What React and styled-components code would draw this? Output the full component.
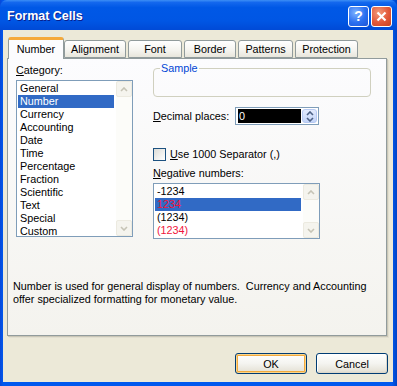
import React from 'react'
import styled, { createGlobalStyle } from 'styled-components'

const GlobalStyle = createGlobalStyle`
  body {
    margin: 0;
    background: #fff;
    font-family: 'Liberation Sans', Arial, sans-serif;
    font-size: 10.8px;
  }
`

const Window = styled.div`
  width: 397px;
  height: 386px;
  display: flex;
  flex-direction: column;
  background: linear-gradient(to right, #0848d8, #0058ee 3px, #0058ee 392px, #0043c4);
  box-sizing: border-box;
`

const TitleBar = styled.div`
  height: 30px;
  flex: none;
  display: flex;
  align-items: center;
  padding: 0 5px 0 7px;
  background: linear-gradient(to bottom, #3d8ff5 0%, #1468ee 8%, #0058e6 25%, #0056e4 70%, #004ad6 100%);
  border-radius: 7px 7px 0 0;
`

const Title = styled.span`
  color: #fff;
  font-family: 'Liberation Sans', Arial, sans-serif;
  font-weight: bold;
  font-size: 12.5px;
  text-shadow: 1px 1px 0 #0a1e8c;
  padding-top: 2px;
`

const CaptionButtons = styled.div`
  margin-left: auto;
  display: flex;
  gap: 2px;
  margin-top: 2px;
`

const CaptionButton = styled.div`
  width: 21px;
  height: 21px;
  box-sizing: border-box;
  border: 1px solid #fff;
  border-radius: 3px;
  display: flex;
  align-items: center;
  justify-content: center;
  color: #fff;
  font-weight: bold;
  font-size: 14px;
  background: ${p =>
    p.$close
      ? 'radial-gradient(circle at 35% 30%, #f29a7a, #e2583a 55%, #c7401e)'
      : 'radial-gradient(circle at 35% 30%, #7fb2ff, #2a6ff0 55%, #1d55d6)'};
`

const Body = styled.div`
  flex: 1;
  margin: 0 4px 4px 3px;
  background: #ece9d8;
  display: flex;
  flex-direction: column;
`

const TabStrip = styled.div`
  display: flex;
  align-items: flex-end;
  gap: 2px;
  height: 21px;
  margin-top: 7px;
  padding-left: 5px;
  position: relative;
  z-index: 1;
`

const Tab = styled.div`
  width: ${p => p.$w}px;
  height: ${p => (p.$active ? 22 : 18)}px;
  box-sizing: border-box;
  border: 1px solid #919b9c;
  border-bottom: ${p => (p.$active ? 'none' : '1px solid #919b9c')};
  border-top: ${p => (p.$active ? '3px solid #f5a93a' : '1px solid #919b9c')};
  border-radius: 3px 3px 0 0;
  margin-right: ${p => (p.$active ? '-2px' : '0')};
  margin-bottom: ${p => (p.$active ? '-1px' : '0')};
  background: ${p => (p.$active ? '#fcfcfe' : 'linear-gradient(#ffffff, #f4f3ee 60%, #e8e6dc)')};
  display: flex;
  align-items: center;
  justify-content: center;
  padding-bottom: ${p => (p.$active ? '2px' : '0')};
  color: #000;
`

const Panel = styled.div`
  height: 278px;
  margin: 0 6px 0 4px;
  box-sizing: border-box;
  border: 1px solid #919b9c;
  background: linear-gradient(#fcfcfe, #f4f3ee);
  box-shadow: 1px 1px 0 #c9c6b6, 2px 2px 0 #e2dfd0;
  padding: 3px 0 0 8px;
  display: flex;
  flex-direction: column;
`

const Upper = styled.div`
  display: flex;
  gap: 20px;
`

const Column = styled.div`
  display: flex;
  flex-direction: column;
  width: ${p => p.$w}px;
`

const Label = styled.div`
  height: 13px;
  line-height: 13px;
  width: ${p => (p.$w ? `${p.$w}px` : 'auto')};
  flex: none;
  margin-top: ${p => p.$mt || 0}px;
  color: #000;
  white-space: nowrap;
`

const ListBox = styled.div`
  display: flex;
  width: ${p => p.$w}px;
  height: ${p => p.$h}px;
  margin-top: 3px;
  box-sizing: border-box;
  border: 1px solid #7f9db9;
  background: #fff;
`

const ListItems = styled.div`
  flex: 1;
  padding: 1px 2px 0 1px;
`

const ListItem = styled.div`
  height: 13px;
  line-height: 13px;
  padding-left: 2px;
  white-space: nowrap;
  background: ${p => (p.$selected ? '#316ac5' : 'transparent')};
  color: ${p => (p.$red ? '#f0143c' : p.$selected ? '#fff' : '#000')};
`

const ScrollBar = styled.div`
  width: 16px;
  display: flex;
  flex-direction: column;
  justify-content: space-between;
  background: #fcfcf9;
`

const ScrollArrow = styled.div`
  width: 16px;
  height: 16px;
  box-sizing: border-box;
  border: 1px solid #eceae0;
  border-radius: 2px;
  background: #f5f4ee;
  display: flex;
  align-items: center;
  justify-content: center;
`

const SampleBox = styled.fieldset`
  margin: 0;
  height: 35px;
  box-sizing: border-box;
  border: 1px solid #d0d0bf;
  border-radius: 4px;
  padding: 0 6px;
`

const SampleLegend = styled.legend`
  color: #0046d5;
  padding: 0 1px;
  margin-left: 0;
  line-height: 13px;
`

const Row = styled.div`
  display: flex;
  align-items: center;
  margin-top: ${p => p.$mt || 0}px;
`

const SpinBox = styled.div`
  display: flex;
  width: 84px;
  height: 18px;
  box-sizing: border-box;
  border: 1px solid #7f9db9;
  background: #fff;
  padding: 1px 1px 1px 2px;
`

const SpinValue = styled.div`
  flex: 1;
  background: #000;
  color: #fff;
  line-height: 14px;
  padding-left: 1px;
  margin-right: 1px;
`

const SpinButtons = styled.div`
  width: 15px;
  display: flex;
  flex-direction: column;
  border-radius: 3px;
  overflow: hidden;
  border: 1px solid #b7c9f2;
  box-sizing: border-box;
  background: linear-gradient(#e3ebfe, #c3d4f8);
`

const SpinButton = styled.div`
  flex: 1;
  display: flex;
  align-items: center;
  justify-content: center;
`

const CheckBox = styled.div`
  width: 13px;
  height: 13px;
  box-sizing: border-box;
  border: 1px solid #1c5180;
  background: linear-gradient(135deg, #dcdcd7, #ffffff);
  margin-right: 4px;
`

const Description = styled.div`
  margin-top: 41px;
  margin-left: -3px;
  line-height: 13px;
  color: #000;
`

const ButtonRow = styled.div`
  display: flex;
  justify-content: flex-end;
  gap: 9px;
  margin-top: 17px;
  padding-right: 5px;
`

const Button = styled.button`
  width: 72px;
  height: 21px;
  padding: 0;
  font: inherit;
  color: #000;
  border: 1px solid #003c74;
  border-radius: 3px;
  background: linear-gradient(#ffffff, #f4f4f0 50%, #e6e3d8 90%, #d6d0c5);
  box-shadow: ${p =>
    p.$default
      ? 'inset 0 0 0 1px #fbd68d, inset 0 0 0 2px #f2aa3e'
      : 'inset -1px -1px 0 #dcd8cb, inset 1px 1px 0 #fff'};
`

const Chevron = ({ up, color = '#c6c4b6' }) => (
  <svg width="8" height="5" viewBox="0 0 8 5">
    <path
      d={up ? 'M1 4 L4 1 L7 4' : 'M1 1 L4 4 L7 1'}
      fill="none"
      stroke={color}
      strokeWidth="1.6"
    />
  </svg>
)

const Scroll = () => (
  <ScrollBar>
    <ScrollArrow><Chevron up /></ScrollArrow>
    <ScrollArrow><Chevron /></ScrollArrow>
  </ScrollBar>
)

const tabs = [
  { name: 'Number', w: 56, active: true },
  { name: 'Alignment', w: 62 },
  { name: 'Font', w: 54 },
  { name: 'Border', w: 52 },
  { name: 'Patterns', w: 55 },
  { name: 'Protection', w: 63 }
]

const categories = [
  'General', 'Number', 'Currency', 'Accounting', 'Date', 'Time',
  'Percentage', 'Fraction', 'Scientific', 'Text', 'Special', 'Custom'
]

const negatives = [
  { text: '-1234' },
  { text: '1234', red: true, selected: true },
  { text: '(1234)' },
  { text: '(1234)', red: true }
]

export default function App () {
  return (
    <>
      <GlobalStyle />
      <Window>
        <TitleBar>
          <Title>Format Cells</Title>
          <CaptionButtons>
            <CaptionButton>?</CaptionButton>
            <CaptionButton $close>
              <svg width="11" height="11" viewBox="0 0 11 11">
                <path d="M1.5 1.5 L9.5 9.5 M9.5 1.5 L1.5 9.5" stroke="#fff" strokeWidth="2.2" />
              </svg>
            </CaptionButton>
          </CaptionButtons>
        </TitleBar>
        <Body>
          <TabStrip>
            {tabs.map(t => (
              <Tab key={t.name} $w={t.w} $active={t.active}>{t.name}</Tab>
            ))}
          </TabStrip>
          <Panel>
            <Upper>
              <Column $w={117}>
                <Label $mt={2}><u>C</u>ategory:</Label>
                <ListBox $w={117} $h={157}>
                  <ListItems>
                    {categories.map(c => (
                      <ListItem key={c} $selected={c === 'Number'}>{c}</ListItem>
                    ))}
                  </ListItems>
                  <Scroll />
                </ListBox>
              </Column>
              <Column $w={218}>
                <SampleBox>
                  <SampleLegend>Sample</SampleLegend>
                </SampleBox>
                <Row $mt={10}>
                  <Label $w={82}><u>D</u>ecimal places:</Label>
                  <SpinBox>
                    <SpinValue>0</SpinValue>
                    <SpinButtons>
                      <SpinButton><Chevron up color="#4d6185" /></SpinButton>
                      <SpinButton><Chevron color="#4d6185" /></SpinButton>
                    </SpinButtons>
                  </SpinBox>
                </Row>
                <Row $mt={23}>
                  <CheckBox />
                  <Label><u>U</u>se 1000 Separator (,)</Label>
                </Row>
                <Label $mt={6}><u>N</u>egative numbers:</Label>
                <ListBox $w={167} $h={56}>
                  <ListItems>
                    {negatives.map((n, i) => (
                      <ListItem key={i} $selected={n.selected} $red={n.red}>{n.text}</ListItem>
                    ))}
                  </ListItems>
                  <Scroll />
                </ListBox>
              </Column>
            </Upper>
            <Description>
              Number is used for general display of numbers.&nbsp; Currency and Accounting<br />
              offer specialized formatting for monetary value.
            </Description>
          </Panel>
          <ButtonRow>
            <Button $default>OK</Button>
            <Button>Cancel</Button>
          </ButtonRow>
        </Body>
      </Window>
    </>
  )
}
